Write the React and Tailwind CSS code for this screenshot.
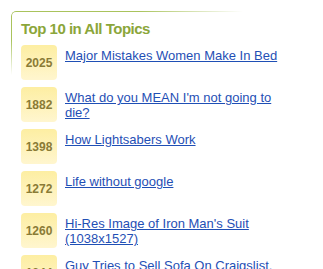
const topics = [
    { score: 2025, title: "Major Mistakes Women Make In Bed" },
    { score: 1882, title: "What do you MEAN I'm not going to die?" },
    { score: 1398, title: "How Lightsabers Work" },
    { score: 1272, title: "Life without google" },
    { score: 1260, title: "Hi-Res Image of Iron Man's Suit (1038x1527)" },
    { score: 1244, title: "Guy Tries to Sell Sofa On Craigslist. Hilarity Ensues" },
]

export default function App() {
    return (
        <div className="h-[269px] w-[323px] overflow-hidden bg-white pl-[11px] pt-[11px] font-['Liberation_Sans',Arial,sans-serif]">
            <div className="relative pl-[10px] pt-[9px]">
                {/* fading frame in the top left corner */}
                <div className="pointer-events-none absolute left-0 top-0 h-[64px] w-[232px] rounded-tl-[5px] border-l border-t border-[#a9c35c] [mask-composite:intersect] [mask-image:linear-gradient(to_right,#000_55%,transparent),linear-gradient(to_bottom,#000_45%,transparent)]" />
                <h2 className="text-[15px] font-bold leading-[18px] tracking-[-0.5px] text-[#8ba63a]">
                    Top 10 in All Topics
                </h2>
                <ul className="mt-[7px] flex flex-col gap-[7px]">
                    {topics.map((t) => (
                        <li key={t.score} className="flex items-start gap-[8px]">
                            <div className="flex h-[35px] w-[36px] shrink-0 items-center justify-center rounded-[4px] bg-[linear-gradient(to_bottom,#fdeea2,#fff6cf)] text-[12px] font-bold text-[#8a7b36]">
                                {t.score}
                            </div>
                            <a
                                href="#"
                                className="mt-[3px] w-[225px] text-[13px] leading-[15px] text-[#1f4fb5] underline"
                            >
                                {t.title}
                            </a>
                        </li>
                    ))}
                </ul>
            </div>
        </div>
    )
}
